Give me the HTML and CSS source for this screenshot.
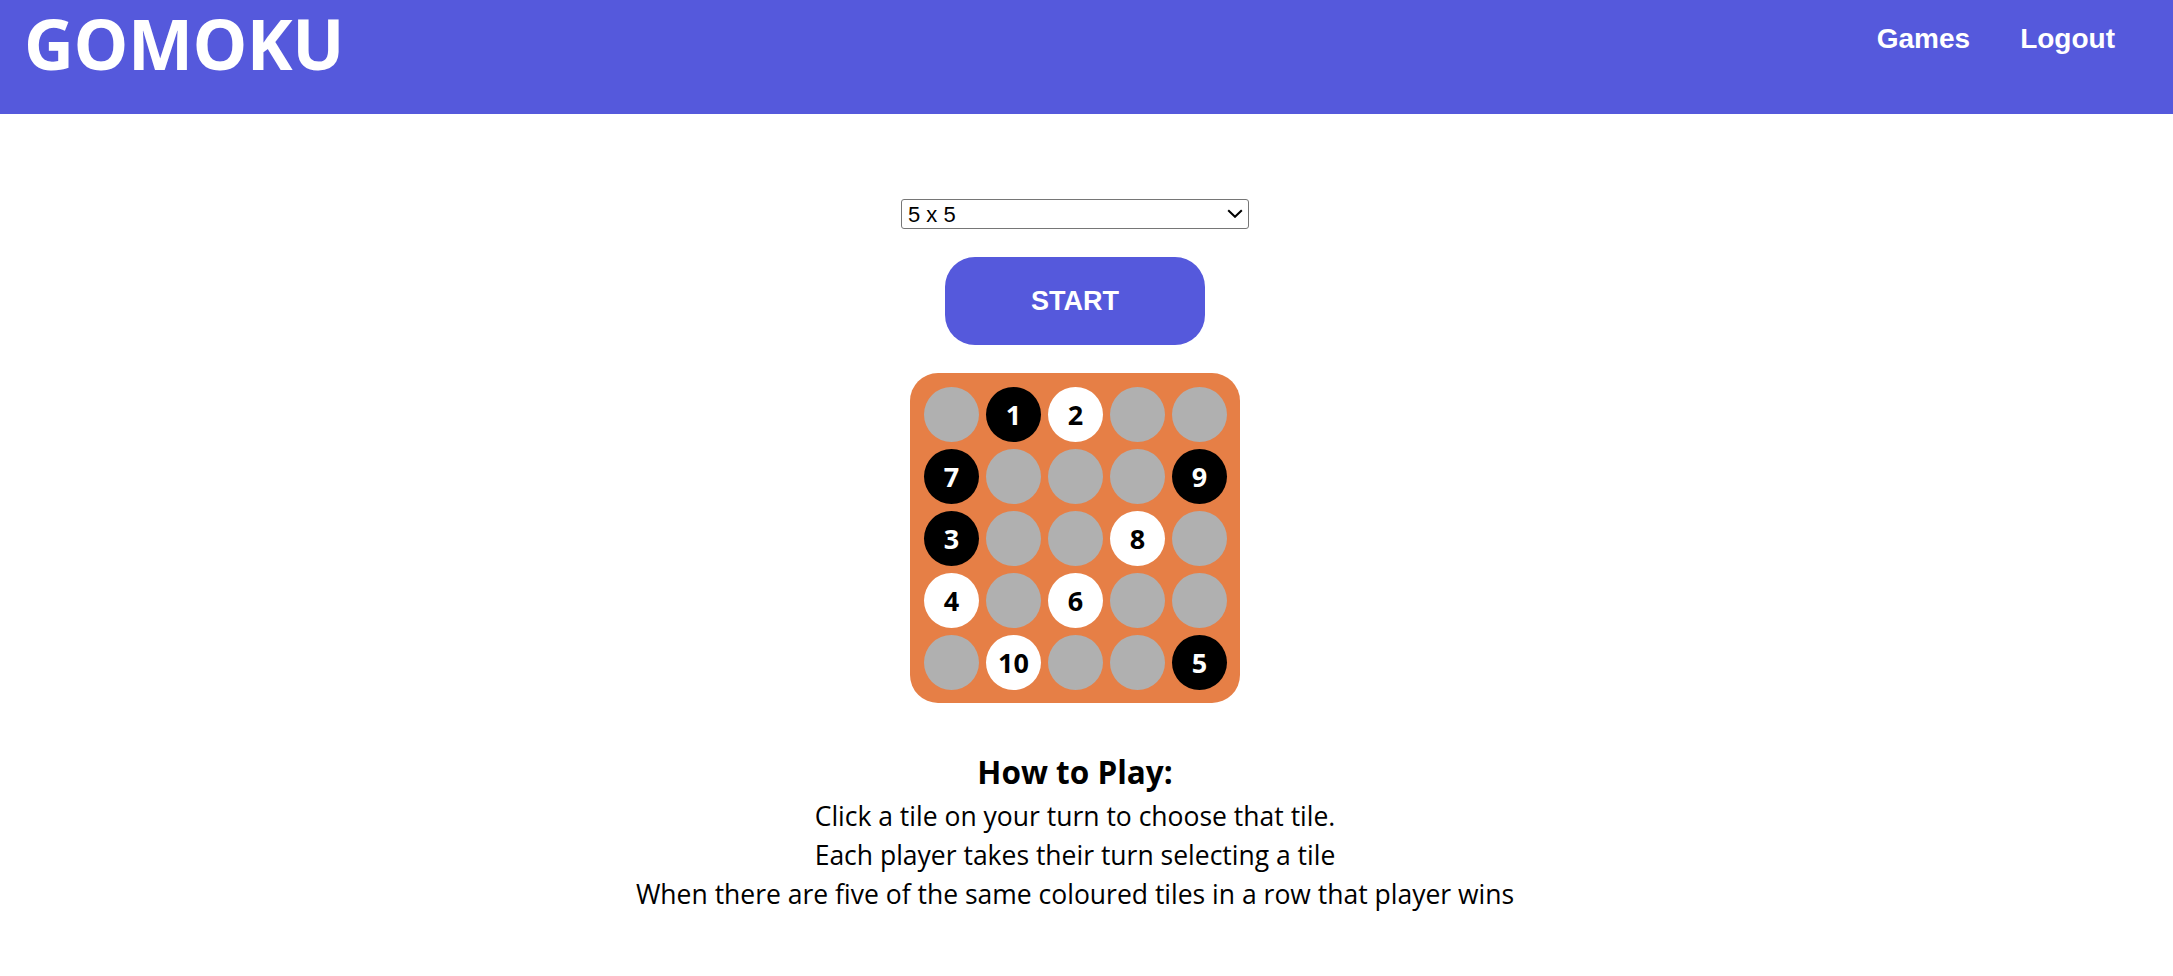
FILE: index.html
```html
<!DOCTYPE html>
<html lang="en">
<head>
<meta charset="utf-8">
<title>Gomoku</title>
<link rel="stylesheet" href="styles.css">
</head>
<body>
<header class="topbar">
  <div class="logo">GOMOKU</div>
  <nav class="nav">
    <a class="nav-link" href="#">Games</a>
    <a class="nav-link" href="#">Logout</a>
  </nav>
</header>
<main class="main">
  <div class="select-wrap">
    <select class="size-select">
      <option>5 x 5</option>
    </select>
    <svg class="chevron" width="16" height="9" viewBox="0 0 16 9"><path d="M1.2 1.2 L8 7.8 L14.8 1.2" fill="none" stroke="#000" stroke-width="2"/></svg>
  </div>
  <button class="start-btn">START</button>
  <div class="board">
    <div class="tile"></div>
    <div class="tile black">1</div>
    <div class="tile white">2</div>
    <div class="tile"></div>
    <div class="tile"></div>

    <div class="tile black">7</div>
    <div class="tile"></div>
    <div class="tile"></div>
    <div class="tile"></div>
    <div class="tile black">9</div>

    <div class="tile black">3</div>
    <div class="tile"></div>
    <div class="tile"></div>
    <div class="tile white">8</div>
    <div class="tile"></div>

    <div class="tile white">4</div>
    <div class="tile"></div>
    <div class="tile white">6</div>
    <div class="tile"></div>
    <div class="tile"></div>

    <div class="tile"></div>
    <div class="tile white">10</div>
    <div class="tile"></div>
    <div class="tile"></div>
    <div class="tile black">5</div>
  </div>
  <section class="rules">
    <h2 class="rules-title">How to Play:</h2>
    <p class="rules-line">Click a tile on your turn to choose that tile.</p>
    <p class="rules-line">Each player takes their turn selecting a tile</p>
    <p class="rules-line">When there are five of the same coloured tiles in a row that player wins</p>
  </section>
</main>
</body>
</html>
```
FILE: styles.css
```css
* { box-sizing: border-box; }
html, body { margin: 0; padding: 0; background: #fff; }
body { font-family: "Open Sans", "Liberation Sans", sans-serif; color: #000; }

.topbar {
  height: 114px;
  background: #5559dc;
  display: flex;
  justify-content: space-between;
  align-items: flex-start;
  padding: 0 58px 0 24px;
}
.logo {
  font-family: "Open Sans", sans-serif;
  font-weight: 700;
  font-size: 69px;
  line-height: 1;
  color: #fff;
  padding-top: 9px;
  letter-spacing: -0.5px;
}
.nav { display: flex; gap: 50px; padding-top: 19px; }
.nav-link {
  font-family: "Liberation Sans", Arial, sans-serif;
  font-weight: 700;
  font-size: 28px;
  line-height: 40px;
  color: #fff;
  text-decoration: none;
}

.main {
  display: flex;
  flex-direction: column;
  align-items: center;
  padding: 85px 23px 0 0;
}
.select-wrap { position: relative; width: 348px; height: 30px; }
.size-select {
  appearance: none;
  -webkit-appearance: none;
  width: 100%;
  height: 30px;
  border: 1px solid #767676;
  border-radius: 3px;
  background: #fff;
  font-family: "Liberation Sans", Arial, sans-serif;
  font-size: 22px;
  padding: 0 0 0 6px;
  color: #000;
}
.chevron { position: absolute; right: 6px; top: 10px; pointer-events: none; }

.start-btn {
  margin-top: 28px;
  width: 260px;
  height: 88px;
  border: none;
  border-radius: 30px;
  background: #5559dc;
  color: #fff;
  font-family: "Liberation Sans", Arial, sans-serif;
  font-weight: 700;
  font-size: 27px;
}

.board {
  margin-top: 28px;
  width: 330px;
  height: 330px;
  background: #e67f46;
  border-radius: 28px;
  padding: 14px;
  display: grid;
  grid-template-columns: repeat(5, 55px);
  grid-template-rows: repeat(5, 55px);
  gap: 7px;
}
.tile {
  border-radius: 50%;
  background: #b0b0b0;
  display: flex;
  align-items: center;
  justify-content: center;
  font-family: "Open Sans", sans-serif;
  font-weight: 700;
  font-size: 27px;
}
.tile.black { background: #000; color: #fff; }
.tile.white { background: #fff; color: #000; }

.rules { text-align: center; margin-top: 49px; }
.rules-title {
  margin: 0 0 5px;
  font-family: "Open Sans", sans-serif;
  font-weight: 700;
  font-size: 31.5px;
  line-height: 40px;
}
.rules-line {
  margin: 0;
  font-family: "Open Sans", sans-serif;
  font-size: 26.5px;
  line-height: 39px;
}
```
